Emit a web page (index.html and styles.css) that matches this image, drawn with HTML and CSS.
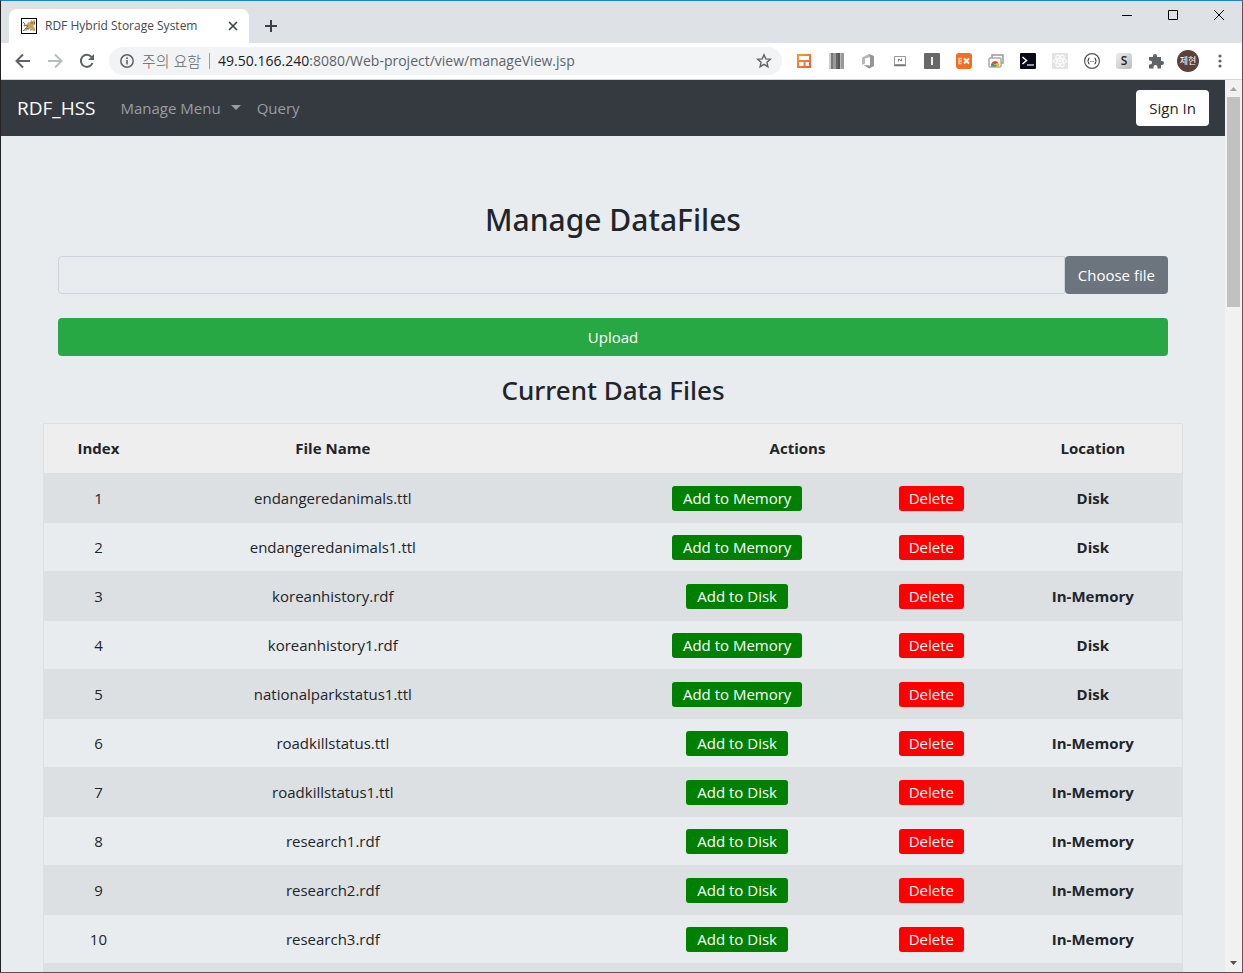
FILE: index.html
```html
<!DOCTYPE html>
<html lang="ko">
<head>
<meta charset="utf-8">
<title>RDF Hybrid Storage System</title>
<link rel="stylesheet" href="styles.css">
</head>
<body>
<div class="window">
  <header class="tabstrip">
    <div class="tab">
      <svg class="favicon" viewBox="0 0 16 16" width="16" height="16"><rect x=".5" y=".5" width="15" height="15" fill="#fff" stroke="#000"/><path d="M7 4l2 .5L10 2l1.500 1L14 2v4.500L12 8l2 2v3h-2l-2-3-4 2-3 1 2-4z" fill="#c9a35a"/><path d="M2 4l2 2-1 2 3-1 1 2M2 13l3-3 3 1M9 12l2-1" stroke="#77705c" fill="none"/><path d="M3 12h3M9 10l1 3" stroke="#aaa"/><path d="M10.500 5h1M13 5h1" stroke="#222"/></svg>
      <span class="tab-title">RDF Hybrid Storage System</span>
      <button class="plain" aria-label="Close tab"><svg viewBox="0 0 10 10" width="10" height="10"><path d="M1 1l8 8M9 1 1 9" stroke="#3c4043" stroke-width="1.600"/></svg></button>
    </div>
    <button class="plain new-tab" aria-label="New tab"><svg viewBox="0 0 12 12" width="12" height="12"><path d="M6 0v12M0 6h12" stroke="#3c4043" stroke-width="2"/></svg></button>
    <div class="window-controls">
      <button class="plain" aria-label="Minimize"><svg viewBox="0 0 12 12" width="12" height="12"><path d="M1 6.500h10" stroke="#000"/></svg></button>
      <button class="plain" aria-label="Maximize"><svg viewBox="0 0 12 12" width="12" height="12"><path d="M1.500 1.500h9v9h-9z" fill="none" stroke="#000"/></svg></button>
      <button class="plain" aria-label="Close"><svg viewBox="0 0 12 12" width="12" height="12"><path d="M1 1l10 10M11 1 1 11" stroke="#000"/></svg></button>
    </div>
  </header>

  <div class="toolbar">
    <div class="nav-buttons">
      <button class="plain" aria-label="Back"><svg viewBox="0 0 16 16" width="16" height="16"><path d="M15 8H2M8 1.500 1.500 8 8 14.500" fill="none" stroke="#5f6368" stroke-width="2"/></svg></button>
      <button class="plain" aria-label="Forward"><svg viewBox="0 0 16 16" width="16" height="16"><path d="M1 8h13M8 1.500 14.500 8 8 14.500" fill="none" stroke="#babcbe" stroke-width="2"/></svg></button>
      <button class="plain" aria-label="Reload"><svg viewBox="0 0 16 16" width="16" height="16"><path d="M13.500 10A6 6 0 1 1 12.500 4" fill="none" stroke="#5f6368" stroke-width="2"/><path d="M15 1v6H9z" fill="#5f6368"/></svg></button>
    </div>
    <div class="address">
      <svg viewBox="0 0 14 14" width="14" height="14"><circle cx="7" cy="7" r="6.200" fill="none" stroke="#5f6368" stroke-width="1.500"/><path d="M7 6v4.500M7 3.300v1.700" stroke="#5f6368" stroke-width="1.600"/></svg>
      <span class="warning">주의 요함</span>
      <span class="url"><b>49.50.166.240</b>:8080/Web-project/view/manageView.jsp</span>
      <button class="plain" aria-label="Bookmark"><svg viewBox="0 0 16 16" width="16" height="16"><path d="M8 1.800l1.800 4.100 4.500.4-3.400 3 1 4.400L8 11.400l-3.900 2.300 1-4.400-3.400-3 4.500-.4z" fill="none" stroke="#5f6368" stroke-width="1.400"/></svg></button>
    </div>
    <div class="extensions">
      <svg viewBox="0 0 16 16"><defs><linearGradient id="o" x1="0" y1="0" x2="1" y2="1"><stop stop-color="#f9a01b"/><stop offset="1" stop-color="#f4524d"/></linearGradient></defs><path d="M1 1h14v14H1z" fill="url(#o)"/><path d="M3 3h10v4H3zM3 9h4.500v4H3zM9.500 9H13v4H9.500z" fill="#fff"/></svg>
      <svg viewBox="0 0 16 16"><path d="M1 0h15v16H1z" fill="#999"/><path d="M1 0h2v16H1z" fill="#ccc"/><path d="M3 0h2v16H3z" fill="#777"/><path d="M8 0h2v16H8z" fill="#666"/><path d="M10 0h2v16h-2z" fill="#555"/><path d="M12 0h1v16h-1z" fill="#bbb"/></svg>
      <svg viewBox="0 0 16 16"><path d="M2 4.500 9 1l2 1v2L5 5.500v5L2 12z" fill="#b8b8b8"/><path d="M9 1l5 2v10l-5 2.500L3.500 12 10 12.500V3.500z" fill="#959595"/></svg>
      <svg viewBox="0 0 16 16"><path d="M2.500 3.500h11v8h-11z" fill="#fff" stroke="#999"/><path d="M2 12.500h12" stroke="#777" stroke-width="1.500"/><path d="M6.500 8.500v-2.500l3 2V5.500" fill="none" stroke="#777"/></svg>
      <svg viewBox="0 0 16 16"><rect width="16" height="16" rx="1" fill="#686868"/><path d="M8 4v8" stroke="#eee" stroke-width="2"/></svg>
      <svg viewBox="0 0 16 16"><rect width="16" height="16" rx="3" fill="#ef7022"/><path d="M6 5.500H3v5h3M3 8h3" fill="none" stroke="#f9c9a7" stroke-width="1.500"/><path d="M8 5.500l5 5M13 5.500l-5 5" stroke="#fff" stroke-width="1.800"/></svg>
      <svg viewBox="0 0 16 16"><path d="M4 5V2h11v8h-2" fill="none" stroke="#999" stroke-width="1.500"/><rect x="1" y="5" width="12" height="9" rx="1" fill="#fff" stroke="#aaa" stroke-width="1.500"/><path d="M3 13.500a4 4 0 0 1 1.200-4L7 12v1.500z" fill="#34a853"/><path d="M3.800 9.800a4 4 0 0 1 6.600 0L7 11.500z" fill="#ea4335"/><path d="M10.400 9.800a4 4 0 0 1 .6 3.700H7V11z" fill="#fbbc05"/><path d="M5.200 13.500a1.800 1.800 0 0 1 3.600 0z" fill="#4285f4"/></svg>
      <svg viewBox="0 0 16 16"><rect width="16" height="16" rx="1" fill="#070b16"/><path d="M2.500 4l4 3.500-4 3.500" fill="none" stroke="#fff" stroke-width="1.600"/><path d="M7 12h7" stroke="#bbb" stroke-width="1.600"/></svg>
      <svg viewBox="0 0 16 16"><rect width="16" height="16" fill="#e3e3e3"/><g fill="none" stroke="#fff"><ellipse cx="8" cy="8" rx="6.500" ry="2.600"/><ellipse cx="8" cy="8" rx="6.500" ry="2.600" transform="rotate(60 8 8)"/><ellipse cx="8" cy="8" rx="6.500" ry="2.600" transform="rotate(120 8 8)"/></g><circle cx="8" cy="8" r="1.300" fill="#fff"/></svg>
      <svg viewBox="0 0 16 16"><circle cx="8" cy="8" r="7.400" fill="#fff" stroke="#555" stroke-width="1.200"/><path d="M5.500 5Q4.500 5 4.500 6.500T3.300 8q1.200 0 1.200 1.500t1 1.500M10.500 5q1 0 1 1.500T12.700 8q-1.200 0-1.200 1.500t-1 1.500" fill="none" stroke="#444" stroke-width="1.200"/><path d="M6.200 8.500h3.600" stroke="#777" stroke-dasharray="1 .3"/></svg>
      <span class="ext-s">S</span>
      <svg viewBox="0 0 16 16"><path d="M1 4h4V3a2 2 0 0 1 4 0v1h4v4h1a2 2 0 0 1 0 4h-1v3.500H9.500V14a2 2 0 0 0-4 0v1.500H1V11.500h1a2 2 0 0 0 0-4H1z" fill="#5f6368"/></svg>
      <span class="avatar">제현</span>
      <button class="plain" aria-label="Menu"><svg viewBox="0 0 16 16"><g fill="#5f6368"><circle cx="8" cy="3" r="1.600"/><circle cx="8" cy="8" r="1.600"/><circle cx="8" cy="13" r="1.600"/></g></svg></button>
    </div>
  </div>

  <div class="viewport">
    <div class="page">
      <nav class="navbar">
        <a class="brand" href="#">RDF_HSS</a>
        <a class="nav-link dropdown" href="#">Manage Menu</a>
        <a class="nav-link" href="#">Query</a>
        <button class="btn btn-light">Sign In</button>
      </nav>
      <main class="content">
        <h1>Manage DataFiles</h1>
        <form class="upload-form">
          <div class="file-row">
            <input class="file-name" type="text" aria-label="File name" readonly>
            <button class="btn btn-secondary" type="button">Choose file</button>
          </div>
          <button class="btn btn-success" type="button">Upload</button>
        </form>
        <h2>Current Data Files</h2>
        <table class="files">
          <colgroup><col class="c-index"><col class="c-name"><col class="c-gap"><col class="c-inset"><col class="c-add"><col class="c-delete"><col class="c-location"></colgroup>
          <thead><tr><th>Index</th><th>File Name</th><td></td><th colspan="3">Actions</th><th>Location</th></tr></thead>
          <tbody>
            <tr><td>1</td><td>endangeredanimals.ttl</td><td colspan="2"></td><td><button class="action add">Add to Memory</button></td><td><button class="action delete">Delete</button></td><th>Disk</th></tr>
            <tr><td>2</td><td>endangeredanimals1.ttl</td><td colspan="2"></td><td><button class="action add">Add to Memory</button></td><td><button class="action delete">Delete</button></td><th>Disk</th></tr>
            <tr><td>3</td><td>koreanhistory.rdf</td><td colspan="2"></td><td><button class="action add">Add to Disk</button></td><td><button class="action delete">Delete</button></td><th>In-Memory</th></tr>
            <tr><td>4</td><td>koreanhistory1.rdf</td><td colspan="2"></td><td><button class="action add">Add to Memory</button></td><td><button class="action delete">Delete</button></td><th>Disk</th></tr>
            <tr><td>5</td><td>nationalparkstatus1.ttl</td><td colspan="2"></td><td><button class="action add">Add to Memory</button></td><td><button class="action delete">Delete</button></td><th>Disk</th></tr>
            <tr><td>6</td><td>roadkillstatus.ttl</td><td colspan="2"></td><td><button class="action add">Add to Disk</button></td><td><button class="action delete">Delete</button></td><th>In-Memory</th></tr>
            <tr><td>7</td><td>roadkillstatus1.ttl</td><td colspan="2"></td><td><button class="action add">Add to Disk</button></td><td><button class="action delete">Delete</button></td><th>In-Memory</th></tr>
            <tr><td>8</td><td>research1.rdf</td><td colspan="2"></td><td><button class="action add">Add to Disk</button></td><td><button class="action delete">Delete</button></td><th>In-Memory</th></tr>
            <tr><td>9</td><td>research2.rdf</td><td colspan="2"></td><td><button class="action add">Add to Disk</button></td><td><button class="action delete">Delete</button></td><th>In-Memory</th></tr>
            <tr><td>10</td><td>research3.rdf</td><td colspan="2"></td><td><button class="action add">Add to Disk</button></td><td><button class="action delete">Delete</button></td><th>In-Memory</th></tr>
            <tr><td colspan="7"></td></tr>
          </tbody>
        </table>
      </main>
    </div>
    <div class="scrollbar">
      <svg viewBox="0 0 7 4" width="7" height="4"><path d="M0 4 3.500 0 7 4z" fill="#a3a3a3"/></svg>
      <div class="thumb"></div>
      <svg viewBox="0 0 7 4" width="7" height="4"><path d="M0 0h7L3.500 4z" fill="#505050"/></svg>
    </div>
  </div>
</div>
</body>
</html>
```

FILE: styles.css
```css
* { box-sizing: border-box; }

body {
  margin: 0;
  font-family: "Open Sans", "Noto Sans CJK KR", sans-serif;
  font-size: 15px;
  line-height: 24px;
  color: #212529;
}

button, input { font: inherit; color: inherit; }
svg { display: block; flex: none; }

.window {
  display: flex;
  flex-direction: column;
  height: 100vh;
  overflow: hidden;
  border: 1px solid #555;
  border-top-color: #1883d7;
  border-left-color: #222;
  background: #fff;
}

.plain {
  display: grid;
  place-items: center;
  padding: 0;
  border: 0;
  background: none;
}

/* Tab strip */
.tabstrip {
  display: flex;
  flex: none;
  height: 42px;
  padding-left: 8px;
  background: #dee1e6;
}

.tab {
  display: flex;
  align-items: center;
  width: 240px;
  height: 34px;
  margin-top: 8px;
  padding: 0 11px 0 12px;
  border-radius: 8px 8px 0 0;
  background: #fff;
}

.tab-title {
  flex: 1;
  margin-left: 8px;
  font-size: 12px;
  color: #45494d;
  white-space: nowrap;
}

.new-tab { width: 44px; padding-top: 8px; }

.window-controls { display: flex; margin-left: auto; }
.window-controls .plain { width: 46px; height: 28px; }

/* Toolbar */
.toolbar {
  display: flex;
  flex: none;
  align-items: center;
  height: 37px;
  border-bottom: 1px solid #d5d7da;
}

.nav-buttons { display: flex; gap: 16px; padding: 0 14px; }

.address {
  display: flex;
  flex: 1;
  align-items: center;
  height: 28px;
  padding: 0 10px 0 11px;
  border-radius: 14px;
  background: #f1f3f4;
  font-size: 14px;
  color: #5f6368;
  white-space: nowrap;
}

.warning {
  margin-left: 8px;
  padding-right: 8px;
  border-right: 1px solid #9aa0a6;
  font-size: 15px;
  font-weight: 300;
  line-height: 16px;
}

.url { flex: 1; margin-left: 8px; }
.url b { font-weight: 400; color: #202124; }

.extensions {
  display: flex;
  align-items: center;
  gap: 16px;
  padding: 0 14px;
}

.extensions svg { width: 16px; height: 16px; }

.ext-s {
  width: 16px;
  border-radius: 3px;
  background: linear-gradient(135deg, #eee, #bbb);
  font-size: 12px;
  font-weight: 600;
  line-height: 16px;
  text-align: center;
}

.avatar {
  width: 22px;
  margin: 0 -3px;
  border-radius: 50%;
  background: #5d4037;
  font-size: 9px;
  line-height: 22px;
  color: #fff;
  text-align: center;
  white-space: nowrap;
}

/* Page area */
.viewport { display: flex; flex: 1; min-height: 0; }
.page { flex: 1; overflow: hidden; background: #e8ecef; }

.scrollbar {
  display: flex;
  flex-direction: column;
  align-items: center;
  width: 17px;
  padding: 7px 0;
  background: #f1f1f1;
}

.thumb { width: 13px; height: 210px; margin: 6px 0 auto; background: #c1c1c1; }

.navbar {
  display: flex;
  align-items: center;
  height: 56px;
  padding: 0 16px;
  background: #343a40;
}

.navbar a { text-decoration: none; }
.brand { margin-right: 25px; font-size: 19px; color: #fff; }
.nav-link { margin-right: 16px; color: #9a9da0; }

.dropdown::after {
  content: "";
  display: inline-block;
  margin-left: 10px;
  border: 5px solid transparent;
  border-top-color: currentColor;
  border-bottom: 0;
  vertical-align: 4px;
}

.btn {
  padding: 6px 12px;
  border: 1px solid transparent;
  border-radius: 4px;
  text-align: center;
}

.btn-light { height: 36px; margin-left: auto; padding: 5px 12px; background: #fff; }
.btn-secondary { background: #6c757d; color: #fff; }
.btn-success { background: #28a745; color: #fff; }

.content { padding: 64px 42px 0; }

h1, h2 {
  margin: 0;
  font-family: "Noto Sans", "Open Sans", sans-serif;
  font-weight: 500;
  text-align: center;
}

h1 { font-size: 30px; line-height: 40px; }
h2 { margin-top: 16px; font-size: 26px; line-height: 36px; }

.upload-form { display: grid; gap: 24px; margin-top: 16px; padding: 0 15px; }
.file-row { display: flex; }

.file-name {
  flex: 1;
  padding: 6px 12px;
  border: 1px solid #ced4da;
  border-radius: 4px 0 0 4px;
  background: transparent;
}

/* File table */
.files {
  width: 100%;
  margin-top: 15px;
  border: 1px solid #dde0e3;
  border-collapse: collapse;
  table-layout: fixed;
  text-align: center;
}

.c-index { width: 9.6%; }
.c-name { width: 31.6%; }
.c-gap { width: 6.9%; }
.c-inset { width: 2.1%; }
.c-add { width: 21.4%; }
.c-delete { width: 12.7%; }
.c-location { width: 15.7%; }

.files th, .files td { height: 49px; padding: 0; border-top: 1px solid #dde0e3; }
.files th { font-weight: 700; }
.files thead { background: #eee; }
.files thead th, .files thead td { height: 50px; border-bottom: 2px solid #dce0e3; }
.files tbody tr:nth-child(odd) { background: #dce0e3; }

.action {
  height: 25px;
  padding: 0 10px;
  border: 0;
  border-radius: 3px;
  line-height: 25px;
  color: #fff;
}

.add { padding: 0 11px; background: #008000; }
.delete { background: #f00; }
```
